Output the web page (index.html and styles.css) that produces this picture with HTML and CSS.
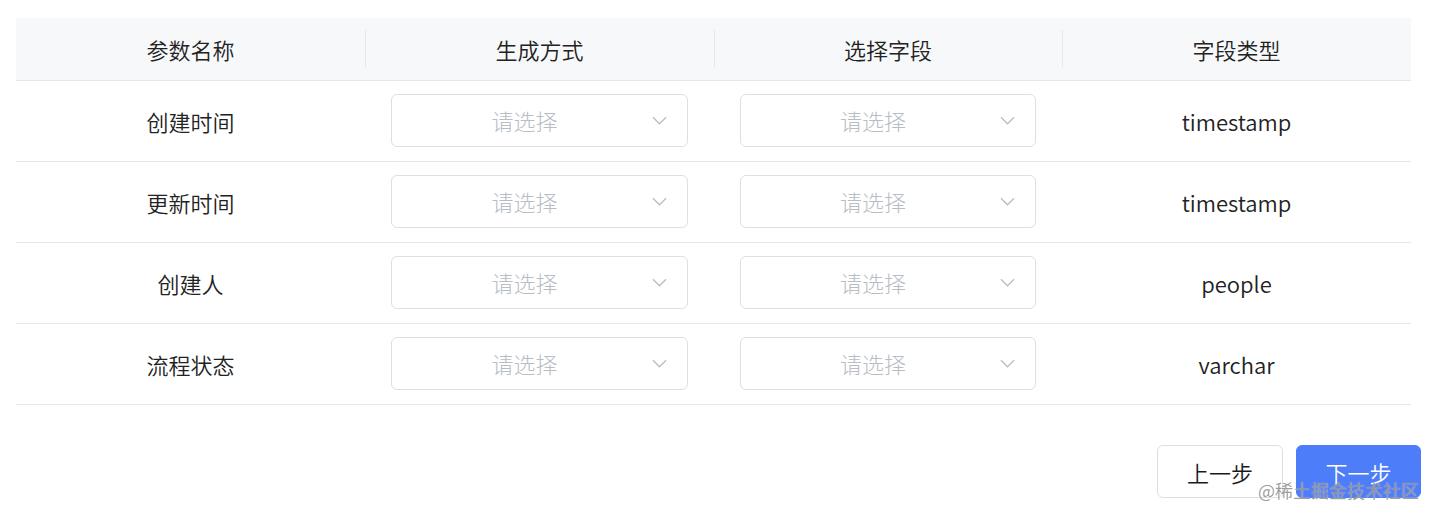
FILE: index.html
```html
<!DOCTYPE html>
<html lang="zh">
<head>
<meta charset="utf-8">
<link rel="stylesheet" href="styles.css">
</head>
<body>
<div class="page">
  <div class="table">
    <div class="row head">
      <div class="cell">参数名称</div>
      <div class="cell sep">生成方式</div>
      <div class="cell sep">选择字段</div>
      <div class="cell sep">字段类型</div>
    </div>
    <div class="row">
      <div class="cell">创建时间</div>
      <div class="cell"><div class="select"><span class="ph">请选择</span><svg class="arrow" viewBox="0 0 16 9"><path d="M1 1 L8 8 L15 1"/></svg></div></div>
      <div class="cell"><div class="select"><span class="ph">请选择</span><svg class="arrow" viewBox="0 0 16 9"><path d="M1 1 L8 8 L15 1"/></svg></div></div>
      <div class="cell">timestamp</div>
    </div>
    <div class="row">
      <div class="cell">更新时间</div>
      <div class="cell"><div class="select"><span class="ph">请选择</span><svg class="arrow" viewBox="0 0 16 9"><path d="M1 1 L8 8 L15 1"/></svg></div></div>
      <div class="cell"><div class="select"><span class="ph">请选择</span><svg class="arrow" viewBox="0 0 16 9"><path d="M1 1 L8 8 L15 1"/></svg></div></div>
      <div class="cell">timestamp</div>
    </div>
    <div class="row">
      <div class="cell">创建人</div>
      <div class="cell"><div class="select"><span class="ph">请选择</span><svg class="arrow" viewBox="0 0 16 9"><path d="M1 1 L8 8 L15 1"/></svg></div></div>
      <div class="cell"><div class="select"><span class="ph">请选择</span><svg class="arrow" viewBox="0 0 16 9"><path d="M1 1 L8 8 L15 1"/></svg></div></div>
      <div class="cell">people</div>
    </div>
    <div class="row">
      <div class="cell">流程状态</div>
      <div class="cell"><div class="select"><span class="ph">请选择</span><svg class="arrow" viewBox="0 0 16 9"><path d="M1 1 L8 8 L15 1"/></svg></div></div>
      <div class="cell"><div class="select"><span class="ph">请选择</span><svg class="arrow" viewBox="0 0 16 9"><path d="M1 1 L8 8 L15 1"/></svg></div></div>
      <div class="cell">varchar</div>
    </div>
  </div>
  <div class="footer">
    <button class="btn">上一步</button>
    <button class="btn primary">下一步</button>
  </div>
  <div class="watermark">@稀土掘金技术社区</div>
</div>
</body>
</html>
```

FILE: styles.css
```css
* { box-sizing: border-box; }
html, body { margin: 0; padding: 0; background: #fff; }
body {
  font-family: "Noto Sans CJK SC", "Noto Sans", sans-serif;
  font-weight: 350;
  color: #222;
  font-size: 22px;
}
.page {
  position: relative;
  width: 1433px;
  height: 518px;
  padding: 18px 12px 0 16px;
}
.table {
  width: 1395px;
}
.row {
  display: grid;
  grid-template-columns: 349px 349px 348px 349px;
  height: 81px;
  border-bottom: 1px solid #e6e7eb;
}
.row.head {
  height: 63px;
  background: #f7f8fa;
}
.cell {
  display: flex;
  align-items: center;
  justify-content: center;
  padding: 0 26px 1px;
  position: relative;
}
.cell.sep::before {
  content: "";
  position: absolute;
  left: 0;
  top: 12px;
  bottom: 13px;
  width: 1px;
  background: #e6e7eb;
}
.select {
  width: 297px;
  height: 53px;
  margin-top: -1px;
  border: 1px solid #dcdfe6;
  border-radius: 6px;
  display: flex;
  align-items: center;
  padding-right: 30px;
  position: relative;
}
.ph {
  flex: 1;
  text-align: center;
  color: #b8bcc4;
  font-weight: 300;
}
.arrow {
  position: absolute;
  right: 20px;
  top: 21px;
  width: 15px;
  height: 9px;
  fill: none;
  stroke: #b8bcc4;
  stroke-width: 1.3;
}
.footer {
  display: flex;
  justify-content: flex-end;
  gap: 13px;
  margin-top: 40px;
  width: 1405px;
}
.btn {
  width: 126px;
  height: 53px;
  border: 1px solid #dcdfe6;
  border-radius: 6px;
  background: #fff;
  color: #1a1a1a;
  font: inherit;
  font-size: 22px;
  padding: 0;
}
.btn.primary {
  width: 125px;
  background: #4e7df9;
  border-color: #4e7df9;
  color: #fff;
}
.watermark {
  position: absolute;
  right: 14px;
  top: 477px;
  font-size: 18px;
  font-weight: 400;
  color: rgba(140, 140, 140, 0.85);
  text-shadow: 0 0 1px rgba(255,255,255,0.6);
}
```
